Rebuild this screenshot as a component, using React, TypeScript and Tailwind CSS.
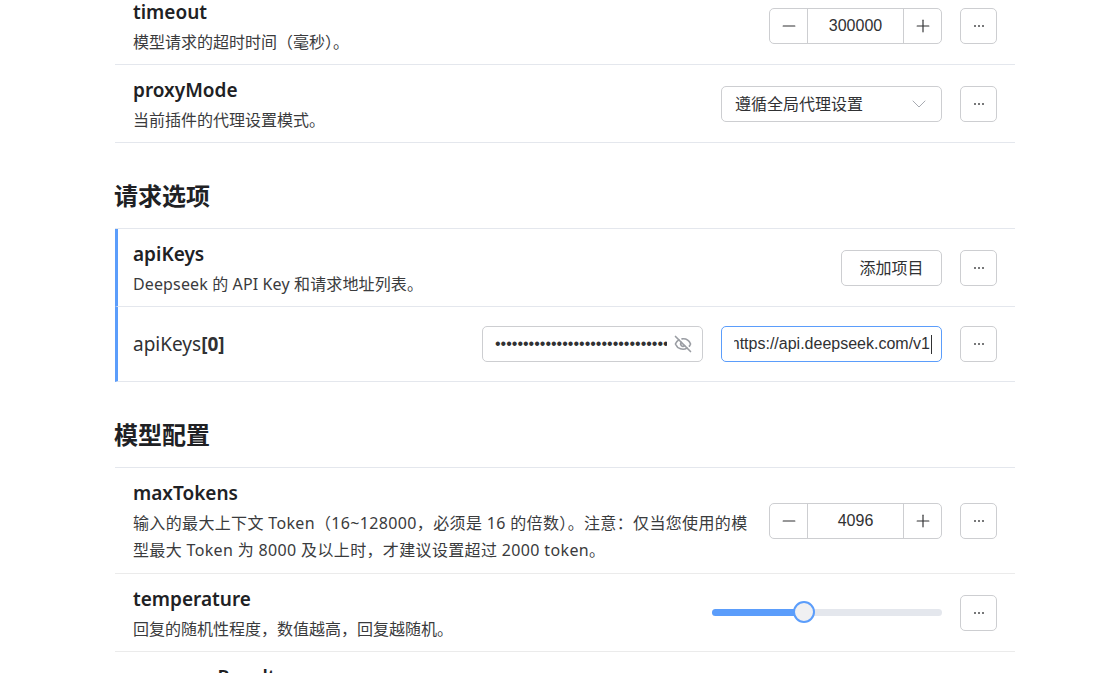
import { ReactNode } from "react";
import { ChevronDown, EyeOff, Minus, Plus } from "lucide-react";

const titleFont = "[font-family:'Noto_Sans','Noto_Sans_CJK_SC',sans-serif]";
const boxStyle = "h-9 bg-white border border-[#cdced1] rounded-[5px] text-[#303133]";

const MoreButton = () => (
    <button className={`${boxStyle} w-[37px] ml-[18px] shrink-0 flex items-center justify-center`}>
        <span className="flex gap-[2px]">
            <i className="w-[2px] h-[2px] rounded-full bg-[#4a4b4d]"></i>
            <i className="w-[2px] h-[2px] rounded-full bg-[#4a4b4d]"></i>
            <i className="w-[2px] h-[2px] rounded-full bg-[#4a4b4d]"></i>
        </span>
    </button>
);

const NumberInput = ({ value }: { value: string }) => (
    <div className={`${boxStyle} w-[173px] flex items-stretch shrink-0`}>
        <div className="w-[38px] flex items-center justify-center border-r border-[#cdced1]">
            <Minus size={20} strokeWidth={1.4} />
        </div>
        <div className="flex-1 flex items-center justify-center text-base font-['Liberation_Sans',sans-serif]">{value}</div>
        <div className="w-[38px] flex items-center justify-center border-l border-[#cdced1]">
            <Plus size={20} strokeWidth={1.4} />
        </div>
    </div>
);

const Row = ({ name, desc, accent, children, line = "border-[#e4e7ed]" }: {
    name: string;
    desc: ReactNode;
    accent?: boolean;
    line?: string;
    children?: ReactNode;
}) => (
    <div className={`flex items-center justify-between border-b ${line} pr-[18px] ${accent ? "border-l-[3px] border-l-[#5b9dfb] pl-[15px]" : "pl-[18px]"} pt-[10px] pb-[8px]`}>
        <div className="flex-1 min-w-0 max-w-[618px]">
            <h3 className={`text-[19px] leading-[30px] mb-[2px] font-semibold text-[#202124] ${titleFont}`}>{name}</h3>
            <div className="text-base leading-[27px] text-[#3a3b3d]">{desc}</div>
        </div>
        <div className="flex items-center mb-[2px]">
            {children}
            <MoreButton />
        </div>
    </div>
);

const SectionTitle = ({ text }: { text: string }) => (
    <h2 className="h-[86px] pt-[36px] border-b border-[#e4e7ed] text-[24px] leading-[34px] font-bold text-[#202124] -indent-px">{text}</h2>
);

export default function App() {
    return (
        <div className="h-screen overflow-hidden bg-white font-['Noto_Sans','Noto_Sans_CJK_SC',sans-serif]">
            <div className="w-[900px] ml-[115px] -mt-[13px]">
                <Row name="timeout" desc="模型请求的超时时间（毫秒）。">
                    <NumberInput value="300000" />
                </Row>
                <Row name="proxyMode" desc="当前插件的代理设置模式。">
                    <div className={`${boxStyle} w-[221px] flex items-center justify-between pl-[13px] pr-[10px] text-base`}>
                        <span>遵循全局代理设置</span>
                        <ChevronDown size={24} strokeWidth={1} className="text-[#a8abb2]" />
                    </div>
                </Row>

                <SectionTitle text="请求选项" />
                <Row name="apiKeys" desc={<span className="tracking-[0.13px]">Deepseek 的 API Key 和请求地址列表。</span>} accent>
                    <button className={`${boxStyle} w-[101px] text-base`}>添加项目</button>
                </Row>
                <div className="h-[75px] flex items-center justify-between border-b border-[#e4e7ed] border-l-[3px] border-l-[#5b9dfb] pl-[15px] pr-[18px]">
                    <span className={`text-[19px] text-[#303133] ${titleFont}`}>apiKeys<b className="font-bold">[0]</b></span>
                    <div className="flex items-center">
                        <div className={`${boxStyle} w-[221px] flex items-center pl-[12px] pr-[10px]`}>
                            <span className="flex-1 overflow-hidden whitespace-nowrap text-base text-[#303133] font-['Liberation_Sans',sans-serif]">
                                {"•".repeat(36)}
                            </span>
                            <EyeOff size={18} strokeWidth={2.2} className="ml-[7px] text-[#9a9da3] shrink-0" />
                        </div>
                        <div className="ml-[18px] h-9 w-[221px] bg-white border border-[#5b9dfb] rounded-[5px] pl-[12px] pr-[9px] flex items-center">
                            <div className="w-full overflow-hidden flex items-center justify-end">
                                <span className="shrink-0 whitespace-nowrap text-base text-[#303133] font-['Liberation_Sans',sans-serif]">https://api.deepseek.com/v1</span>
                                <i className="shrink-0 ml-px w-px h-[19px] bg-[#303133]"></i>
                            </div>
                        </div>
                        <MoreButton />
                    </div>
                </div>

                <SectionTitle text="模型配置" />
                <Row name="maxTokens" line="border-[#ebebeb]" desc={<span className="block pb-px tracking-[0.35px]">输入的最大上下文 Token（16~128000，必须是 16 的倍数）。注意：仅当您使用的模型最大 Token 为 8000 及以上时，才建议设置超过 2000 token。</span>}>
                    <NumberInput value="4096" />
                </Row>
                <Row name="temperature" line="border-[#ebebeb]" desc="回复的随机性程度，数值越高，回复越随机。">
                    <div className="w-[230px] h-[7px] rounded-full bg-[#e4e7ed] relative">
                        <div className="h-full w-[92px] rounded-full bg-[#5b9dfb]"></div>
                        <div className="absolute left-[81px] -top-[8px] w-[22px] h-[22px] rounded-full bg-[#f0f0f2] border-2 border-[#5b9dfb]"></div>
                    </div>
                </Row>
                {/* only the tops of this title show, the rest is below the fold */}
                <Row name="responseResult" desc={<div className="h-[54px]"></div>} />
            </div>
        </div>
    );
}
